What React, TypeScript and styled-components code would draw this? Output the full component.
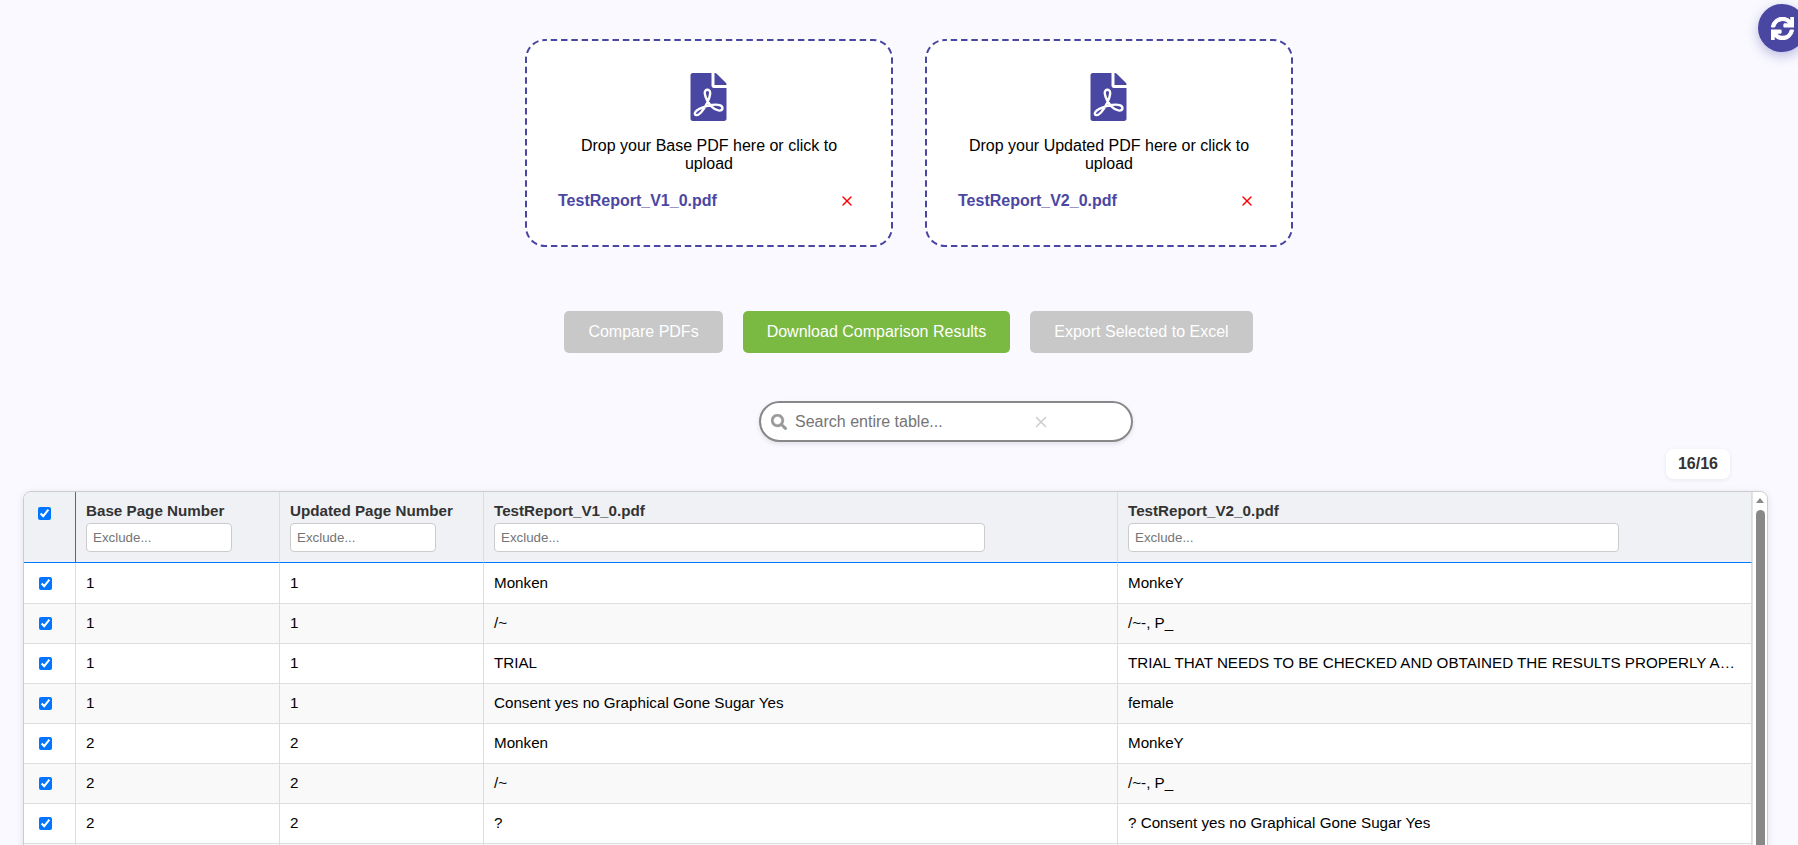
import React from "react";
import styled, { createGlobalStyle } from "styled-components";
import { FaSearch, FaSync } from "react-icons/fa";
import { X } from "lucide-react";

const Global = createGlobalStyle`
  html, body { margin: 0; padding: 0; height: 100%; overflow: hidden; background: #f9f9ff; }
  body { font-family: "Liberation Sans", Arial, sans-serif; color: #000; }
  #root { height: 845px; overflow: hidden; }
`;

const Page = styled.div`
  position: relative;
  display: flex;
  flex-direction: column;
  height: 845px;
  overflow: hidden;
  padding: 39px 30px 0 23px;
  box-sizing: border-box;
`;

const SyncButton = styled.button`
  position: absolute;
  top: 4px;
  right: -8px;
  width: 48px;
  height: 48px;
  border: 0;
  border-radius: 50%;
  background: #4a47a3;
  color: #fff;
  box-shadow: 0 4px 12px rgba(74, 71, 163, 0.35);
  display: flex;
  align-items: center;
  justify-content: center;
  padding: 0;
  font-size: 23px;
`;

const SyncIcon = styled(FaSync)`
  stroke: currentColor;
  stroke-width: 24;
`;

const Uploads = styled.div`
  display: flex;
  justify-content: center;
  gap: 32px;
  margin-left: 27px;
`;

const Card = styled.div`
  position: relative;
  width: 368px;
  height: 208px;
  box-sizing: border-box;
  background: #fff;
  border-radius: 20px;
  padding: 34px 32px 0;
  display: flex;
  flex-direction: column;
  align-items: center;
  text-align: center;
`;

const DashedFrame = styled.svg`
  position: absolute;
  top: 0;
  left: 0;
  width: 368px;
  height: 208px;
  fill: none;
  stroke: #4a47a3;
  stroke-width: 2;
  stroke-dasharray: 6.5 3.8;
  stroke-dashoffset: -5.7;
`;

const PdfSvg = styled.svg`
  width: 37px;
  height: 48px;
  flex: none;
  margin-left: -1px;
`;

const DropText = styled.p`
  margin: 16px 0 0;
  font-size: 16px;
  line-height: 18px;
`;

const FileRow = styled.div`
  align-self: stretch;
  display: flex;
  justify-content: space-between;
  align-items: center;
  margin-top: 9px;
  padding: 7px 6px 0 1px;
`;

const FileName = styled.span`
  color: #4a47a3;
  font-weight: 700;
  font-size: 16px;
  line-height: 24px;
`;

const Remove = styled(X)`
  color: #f00;
  flex: none;
`;

const Actions = styled.div`
  display: flex;
  justify-content: center;
  gap: 20px;
  margin-top: 64px;
  margin-left: 26px;
`;

const ActionButton = styled.button<{ $active?: boolean }>`
  height: 42px;
  padding: 0 24px;
  border: 0;
  border-radius: 5px;
  font: 16px "Liberation Sans", Arial, sans-serif;
  color: #fff;
  background: ${(p) => (p.$active ? "#7ab942" : "#c8c8c8")};
`;

const SearchWrap = styled.div`
  display: flex;
  justify-content: center;
  margin-top: 48px;
  margin-left: 101px;
`;

const SearchBox = styled.div`
  width: 374px;
  height: 41px;
  box-sizing: border-box;
  display: flex;
  align-items: center;
  background: #fff;
  border: 2px solid #888;
  border-radius: 21px;
  box-shadow: 0 2px 5px rgba(0, 0, 0, 0.1);
  padding-left: 10px;
`;

const SearchIcon = styled(FaSearch)`
  color: #999;
  font-size: 16px;
  flex: none;
  stroke: currentColor;
  stroke-width: 10;
`;

const SearchInput = styled.input`
  border: 0;
  outline: 0;
  background: transparent;
  font: 16px "Liberation Sans", Arial, sans-serif;
  margin-left: 8px;
  padding: 0;
  width: 237px;
  &::placeholder { color: #757575; }
`;

const SearchClear = styled(X)`
  color: #ccc;
  flex: none;
`;

const CountRow = styled.div`
  display: flex;
  justify-content: flex-end;
  margin-top: 7px;
  padding-right: 38px;
`;

const Count = styled.div`
  background: #fff;
  border-radius: 7px;
  width: 64px;
  height: 30px;
  display: flex;
  align-items: center;
  justify-content: center;
  font-weight: 700;
  font-size: 16px;
  color: #333;
  box-shadow: 0 1px 4px rgba(0, 0, 0, 0.08);
`;

const TableShell = styled.div`
  position: relative;
  margin-top: 12px;
  flex: none;
  height: 420px;
  background: #fff;
  border: 1px solid #ccc;
  border-radius: 8px 8px 0 0;
  box-shadow: 0 2px 8px rgba(0, 0, 0, 0.1);
  overflow: hidden;
`;

const Table = styled.table`
  width: 1728px;
  border-collapse: separate;
  border-spacing: 0;
  table-layout: fixed;
  font-family: "Liberation Sans", Arial, sans-serif;
  font-size: 15.2px;
`;

const HeadCell = styled.th<{ $select?: boolean }>`
  background: #f0f1f5;
  height: 71px;
  box-sizing: border-box;
  padding: 0 10px;
  text-align: left;
  vertical-align: top;
  font-size: 15.2px;
  font-weight: 700;
  color: #333;
  border-right: 1px solid ${(p) => (p.$select ? "#007bff" : "#ddd")};
  border-bottom: 1px solid #007bff;
`;

const HeadLabel = styled.div`
  margin-top: 11px;
  line-height: 16px;
`;

const FilterInput = styled.input<{ $wide?: boolean }>`
  display: block;
  margin-top: 4px;
  box-sizing: border-box;
  width: ${(p) => (p.$wide ? "491px" : "146px")};
  height: 29px;
  border: 1px solid #ccc;
  border-radius: 4px;
  padding: 0 6px;
  font: 13.33px "Liberation Sans", Arial, sans-serif;
  background: #fff;
`;

const Row = styled.tr<{ $odd: boolean }>`
  background: ${(p) => (p.$odd ? "#f9f9f9" : "#fff")};
  &:first-child > td { height: 41px; }
`;

const Cell = styled.td`
  height: 40px;
  box-sizing: border-box;
  padding: 0 10px 2px;
  color: #000;
  white-space: nowrap;
  overflow: hidden;
  text-overflow: ellipsis;
  border-right: 1px solid #ddd;
  border-bottom: 1px solid #ddd;
`;

const CheckCell = styled(Cell)`
  padding: 0;
`;

const HeadCheck = styled.input`
  display: block;
  width: 13px;
  height: 13px;
  margin: 15px 0 0 4px;
`;

const RowCheck = styled.input`
  display: block;
  width: 13px;
  height: 13px;
  margin: 0 0 0 15px;
`;

const ScrollTrack = styled.div`
  position: absolute;
  top: 0;
  right: 0;
  bottom: 0;
  width: 15px;
  background: #fff;
  border-left: 1px solid #e4e4e4;
  box-sizing: border-box;
`;

const ScrollArrow = styled.div`
  width: 0;
  height: 0;
  margin: 6px auto 0;
  border-left: 4.5px solid transparent;
  border-right: 4.5px solid transparent;
  border-bottom: 5px solid #888;
`;

const ScrollThumb = styled.div`
  width: 9px;
  margin: 7px auto 0;
  height: 400px;
  border-radius: 5px;
  background: #888;
`;

const PdfGlyph = () => (
  <PdfSvg viewBox="0 0 384 512" aria-hidden="true">
    <path
      fill="#4a47a3"
      d="M248 160h136v328c0 13.3-10.7 24-24 24H24c-13.3 0-24-10.7-24-24V24C0 10.7 10.7 0 24 0h200v136c0 13.2 10.8 24 24 24z"
    />
    <path
      fill="#4a47a3"
      d="M377 105L279 7c-4.5-4.5-10.6-7-17-7h-6v128h128v-6.1c0-6.3-2.5-12.4-7-16.9z"
    />
    <path
      fill="none"
      stroke="#fff"
      strokeWidth={25}
      strokeLinejoin="round"
      d="M152 216C146 168 212 164 210 216C208 264 164 362 112 422C76 462 36 456 48 424C60 392 146 352 232 340C288 332 350 340 340 384C330 412 272 404 232 364C190 322 158 264 152 216Z"
    />
  </PdfSvg>
);

const rows: [string, string, string, string][] = [
  ["1", "1", "Monken", "MonkeY"],
  ["1", "1", "/~", "/~-, P_"],
  ["1", "1", "TRIAL", "TRIAL THAT NEEDS TO BE CHECKED AND OBTAINED THE RESULTS PROPERLY AND CORRECTLY IN TIME"],
  ["1", "1", "Consent yes no Graphical Gone Sugar Yes", "female"],
  ["2", "2", "Monken", "MonkeY"],
  ["2", "2", "/~", "/~-, P_"],
  ["2", "2", "?", "? Consent yes no Graphical Gone Sugar Yes"],
];

const uploads = [
  { kind: "Base", file: "TestReport_V1_0.pdf" },
  { kind: "Updated", file: "TestReport_V2_0.pdf" },
];

export default function App() {
  return (
    <Page>
      <Global />
      <SyncButton aria-label="Refresh"><SyncIcon /></SyncButton>
      <Uploads>
        {uploads.map((u) => (
          <Card key={u.kind}>
            <DashedFrame viewBox="0 0 368 208" aria-hidden="true">
              <rect x="1" y="1" width="366" height="206" rx="19" />
            </DashedFrame>
            <PdfGlyph />
            <DropText>Drop your {u.kind} PDF here or click to upload</DropText>
            <FileRow>
              <FileName>{u.file}</FileName>
              <Remove size={16} strokeWidth={2} />
            </FileRow>
          </Card>
        ))}
      </Uploads>
      <Actions>
        <ActionButton>Compare PDFs</ActionButton>
        <ActionButton $active>Download Comparison Results</ActionButton>
        <ActionButton>Export Selected to Excel</ActionButton>
      </Actions>
      <SearchWrap>
        <SearchBox>
          <SearchIcon />
          <SearchInput placeholder="Search entire table..." />
          <SearchClear size={18} strokeWidth={2} />
        </SearchBox>
      </SearchWrap>
      <CountRow><Count>16/16</Count></CountRow>
      <TableShell>
        <Table>
          <colgroup>
            <col style={{ width: 52 }} />
            <col style={{ width: 204 }} />
            <col style={{ width: 204 }} />
            <col style={{ width: 634 }} />
            <col style={{ width: 634 }} />
          </colgroup>
          <thead>
            <tr>
              <HeadCell $select><HeadCheck type="checkbox" defaultChecked /></HeadCell>
              <HeadCell><HeadLabel>Base Page Number</HeadLabel><FilterInput placeholder="Exclude..." /></HeadCell>
              <HeadCell><HeadLabel>Updated Page Number</HeadLabel><FilterInput placeholder="Exclude..." /></HeadCell>
              <HeadCell><HeadLabel>TestReport_V1_0.pdf</HeadLabel><FilterInput $wide placeholder="Exclude..." /></HeadCell>
              <HeadCell><HeadLabel>TestReport_V2_0.pdf</HeadLabel><FilterInput $wide placeholder="Exclude..." /></HeadCell>
            </tr>
          </thead>
          <tbody>
            {rows.map((r, i) => (
              <Row key={i} $odd={i % 2 === 1}>
                <CheckCell><RowCheck type="checkbox" defaultChecked /></CheckCell>
                {r.map((c, j) => <Cell key={j}>{c}</Cell>)}
              </Row>
            ))}
            <Row $odd>
              <CheckCell /><Cell /><Cell /><Cell /><Cell />
            </Row>
          </tbody>
        </Table>
        <ScrollTrack><ScrollArrow /><ScrollThumb /></ScrollTrack>
      </TableShell>
    </Page>
  );
}
